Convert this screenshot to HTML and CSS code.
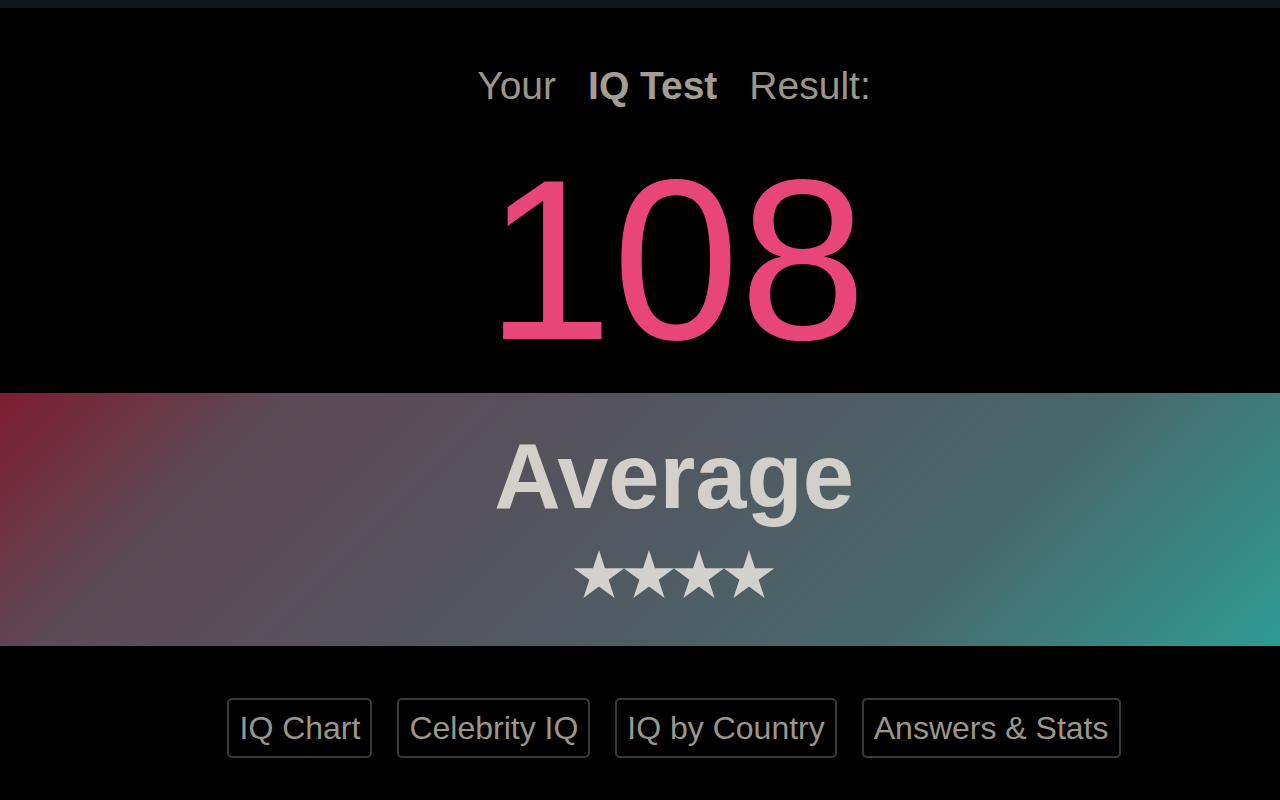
FILE: index.html
```html
<!DOCTYPE html>
<html lang="en">
<head>
    <meta charset="UTF-8">
    <meta name="viewport" content="width=device-width, initial-scale=1.0">
    <title>IQ Test Result</title>
    <link rel="stylesheet" href="styles.css">
</head>
<body>
    <div class="top-bar"></div>

    <div class="result-head">
        <span>Your</span>
        <strong>IQ Test</strong>
        <span>Result:</span>
    </div>

    <div class="score">108</div>

    <div class="band">
        <div class="band-inner">
            <div class="level">Average</div>
            <svg class="stars" width="200" height="50" viewBox="0 0 200 50">
                <defs>
                    <polygon id="star" points="25,0 30.95,18.31 50.2,18.31 34.62,29.63 40.58,47.94 25,36.62 9.42,47.94 15.38,29.63 -0.2,18.31 19.05,18.31"/>
                </defs>
                <use href="#star" x="0"/>
                <use href="#star" x="50"/>
                <use href="#star" x="100"/>
                <use href="#star" x="150"/>
            </svg>
        </div>
    </div>

    <div class="links">
        <a class="link-button" href="#">IQ Chart</a>
        <a class="link-button" href="#">Celebrity IQ</a>
        <a class="link-button" href="#">IQ by Country</a>
        <a class="link-button" href="#">Answers &amp; Stats</a>
    </div>
</body>
</html>
```

FILE: styles.css
```css
body {
    margin: 0;
    background-color: #000;
    font-family: "Liberation Sans", Arial, Helvetica, sans-serif;
    color: #9b958c;
    height: 100vh;
    overflow: hidden;
}
.top-bar {
    height: 8px;
    background-color: #13171c;
}
.result-head {
    display: flex;
    justify-content: center;
    gap: 32px;
    margin-top: 58px;
    padding-left: 68px;
    font-size: 39px;
    line-height: 1;
}
.result-head strong {
    font-weight: bold;
    color: #a39d94;
}
.score {
    margin-top: 41px;
    padding-left: 72px;
    text-align: center;
    font-size: 228px;
    line-height: 1;
    color: #e8457a;
}
.band {
    margin-top: 19px;
    height: 253px;
    background: linear-gradient(135deg, #7d1d32 0%, #5c4a55 19%, #53565f 47%, #48696c 74%, #2e9b92 100%);
}
.band-inner {
    padding: 37px 0 0 68px;
    display: flex;
    flex-direction: column;
    align-items: center;
}
.level {
    font-size: 92px;
    font-weight: bold;
    line-height: 1;
    color: #d3d0cc;
}
.stars {
    display: block;
    margin-top: 28px;
    fill: #d3d1ce;
}
.links {
    display: flex;
    justify-content: center;
    gap: 25px;
    margin-top: 52px;
    padding-left: 68px;
}
.link-button {
    display: block;
    padding: 0 10px;
    line-height: 56px;
    font-size: 32px;
    color: #9b958c;
    text-decoration: none;
    border: 2px solid #363a3d;
    border-radius: 5px;
}
```
